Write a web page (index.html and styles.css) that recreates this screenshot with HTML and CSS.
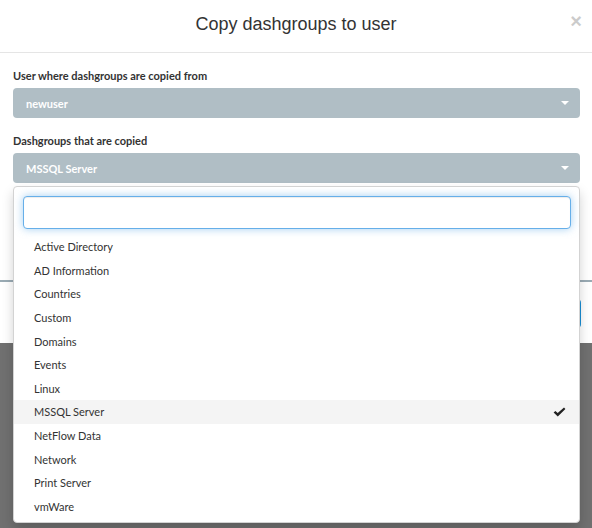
FILE: index.html
```html
<!DOCTYPE html>
<html lang="en">
<head>
    <meta charset="UTF-8">
    <meta name="viewport" content="width=device-width, initial-scale=1.0">
    <title>Copy dashgroups to user</title>
    <link rel="stylesheet" href="styles.css">
</head>
<body>

<div class="backdrop">
    <div class="modal">
        <div class="modal-header">
            <h4 class="modal-title">Copy dashgroups to user</h4>
            <span class="close">&times;</span>
        </div>

        <div class="modal-body">
            <div class="form-group">
                <label>User where dashgroups are copied from</label>
                <div class="select-box">
                    <span>newuser</span>
                    <span class="caret"></span>
                </div>
            </div>

            <div class="form-group picker">
                <label>Dashgroups that are copied</label>
                <div class="select-box">
                    <span>MSSQL Server</span>
                    <span class="caret"></span>
                </div>

                <div class="dropdown-menu">
                    <input type="text" class="search-box">
                    <ul class="options">
                        <li>Active Directory</li>
                        <li>AD Information</li>
                        <li>Countries</li>
                        <li>Custom</li>
                        <li>Domains</li>
                        <li>Events</li>
                        <li>Linux</li>
                        <li class="selected">
                            MSSQL Server
                            <svg class="check" width="13" height="10" viewBox="0 0 13 10">
                                <path d="M0.6 5.6 L2.4 3.9 L4.7 6.1 L11 0.4 L12.4 1.9 L4.8 9.4 Z" fill="#222"/>
                            </svg>
                        </li>
                        <li>NetFlow Data</li>
                        <li>Network</li>
                        <li>Print Server</li>
                        <li>vmWare</li>
                    </ul>
                </div>
            </div>

            <div class="form-group">
                <label>User where dashgroups are copied to</label>
                <div class="text-field"></div>
            </div>
        </div>

        <div class="modal-footer">
            <button class="btn-copy">Copy</button>
        </div>
    </div>
</div>

</body>
</html>
```

FILE: styles.css
```css
html, body {
    height: 100%;
}
body {
    margin: 0;
    font-family: 'Lato', 'Open Sans', sans-serif;
    color: #333;
}
.backdrop {
    min-height: 100%;
    background: #707070;
}
.modal {
    position: relative;
    background: white;
}
.modal-header {
    display: grid;
    grid-template-columns: 1fr auto 1fr;
    align-items: center;
    padding: 14px 0 18px;
    border-bottom: 1px solid #e5e5e5;
}
.modal-title {
    grid-column: 2;
    margin: 0;
    font-family: 'Liberation Sans', Arial, sans-serif;
    font-size: 18px;
    font-weight: normal;
    line-height: 20px;
    color: #333;
}
.close {
    grid-column: 3;
    justify-self: end;
    margin-right: 10px;
    margin-top: -6px;
    font-family: 'Liberation Sans', Arial, sans-serif;
    font-size: 20px;
    font-weight: bold;
    line-height: 20px;
    color: #000;
    opacity: 0.2;
}
.modal-body {
    padding: 15px 12px 30px 13px;
}
.form-group {
    margin-bottom: 15px;
}
.form-group:last-child {
    margin-bottom: 0;
}
.form-group label {
    display: block;
    margin-bottom: 4px;
    font-size: 11px;
    font-weight: bold;
    line-height: 16px;
    color: #333;
}
.select-box {
    display: flex;
    justify-content: space-between;
    align-items: center;
    height: 30px;
    padding: 0 11px 0 13px;
    background: #b0bec5;
    border-radius: 4px;
    color: white;
    font-size: 11px;
    font-weight: bold;
}
.caret {
    width: 0;
    height: 0;
    border-left: 4px solid transparent;
    border-right: 4px solid transparent;
    border-top: 4px solid white;
}
.text-field {
    height: 32px;
    border: 1px solid #9aabb4;
    border-radius: 4px;
    box-sizing: border-box;
}
.picker {
    position: relative;
    z-index: 10;
}
.dropdown-menu {
    position: absolute;
    top: calc(100% + 3px);
    left: 0;
    right: 0;
    padding: 9px 0 4px;
    background: white;
    border: 1px solid #d3d3d3;
    border-radius: 4px;
    box-shadow: 0 6px 12px rgba(0, 0, 0, 0.175);
}
.search-box {
    display: block;
    box-sizing: border-box;
    width: calc(100% - 17px);
    height: 33px;
    margin: 0 8px 0 9px;
    border: 1px solid #66afe9;
    border-radius: 4px;
    box-shadow: inset 0 1px 1px rgba(0, 0, 0, 0.075), 0 0 8px rgba(102, 175, 233, 0.6);
    outline: none;
}
.options {
    list-style: none;
    margin: 6px 0 0;
    padding: 0;
}
.options li {
    display: flex;
    justify-content: space-between;
    align-items: center;
    height: 23.6px;
    padding: 0 13px 0 20px;
    font-size: 11px;
    color: #333;
}
.options li.selected {
    background: #f4f4f4;
}
.modal-footer {
    display: flex;
    justify-content: flex-end;
    padding: 17px 11px 15px;
    border-top: 2px solid #9aabb4;
}
.btn-copy {
    width: 90px;
    height: 29px;
    border: none;
    border-radius: 4px;
    background: #1a8fd6;
    color: white;
    font-family: 'Lato', sans-serif;
    font-size: 12px;
}
```
